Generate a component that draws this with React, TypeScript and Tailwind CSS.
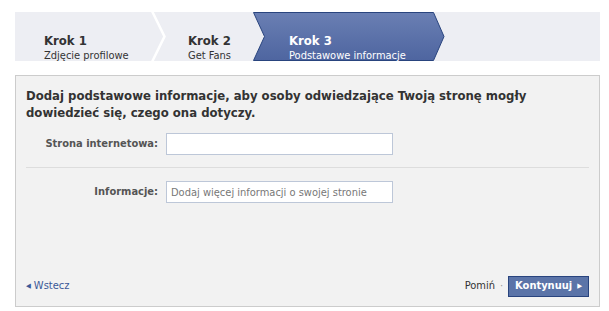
const font = "font-['DejaVu_Sans_Condensed','DejaVu_Sans',sans-serif]";

function StepBar() {
  return (
    <div className="relative h-[49px] w-[585px] overflow-hidden bg-[#edeef3]">
      <svg className="absolute inset-0" width="585" height="49" viewBox="0 0 585 49">
        <defs>
          <linearGradient id="blue" x1="0" y1="0" x2="0" y2="1">
            <stop offset="0" stopColor="#6a7fb3" />
            <stop offset="1" stopColor="#4e65a0" />
          </linearGradient>
        </defs>
        <polyline points="137,-1 149.5,24.5 137,50" fill="none" stroke="#ffffff" strokeWidth="2.5" />
        <polygon
          points="238.5,0.5 418.5,0.5 429,24.5 418.5,48.5 238.5,48.5 249.5,24.5"
          fill="url(#blue)"
          stroke="#29447e"
          strokeWidth="1"
        />
      </svg>
      <div className="relative flex h-full">
        <Step n="1" sub="Zdjęcie profilowe" className="w-[144px] pl-[29px]" />
        <Step n="2" sub="Get Fans" className="w-[101px] pl-[29px]" />
        <Step n="3" sub="Podstawowe informacje" className="w-[200px] pl-[29px]" active />
      </div>
    </div>
  );
}

function Step({ n, sub, className, active }: { n: string; sub: string; className: string; active?: boolean }) {
  return (
    <div className={`pt-[21px] ${className} ${active ? 'text-white' : 'text-[#333]'}`}>
      <div className="text-[13px] leading-[16px] font-bold whitespace-nowrap">Krok {n}</div>
      <div className="text-[11px] leading-[13px] whitespace-nowrap">{sub}</div>
    </div>
  );
}

function Field({ label, placeholder }: { label: string; placeholder?: string }) {
  return (
    <div className="flex items-start">
      <label className="w-[132px] pt-[3px] text-right text-[11px] font-bold text-[#555]">{label}</label>
      <input
        className="ml-[8px] h-[22px] w-[227px] border border-[#bdc7d8] bg-white px-[4px] text-[11px] text-[#333] outline-none placeholder:text-[#777]"
        placeholder={placeholder}
      />
    </div>
  );
}

export default function App() {
  return (
    <div className={`h-[311px] w-[609px] bg-white pl-[15px] pt-[12px] ${font}`}>
      <StepBar />
      <div className="mt-[14px] flex h-[232px] w-[585px] flex-col border border-[#ccc] bg-[#f2f2f2] px-[10px]">
        <h2 className="mt-[11px] text-[13px] leading-[17px] font-bold text-[#333]">
          Dodaj podstawowe informacje, aby osoby odwiedzające Twoją stronę mogły dowiedzieć się, czego ona dotyczy.
        </h2>
        <div className="mt-[12px] pb-[12px]">
          <Field label="Strona internetowa:" />
        </div>
        <div className="border-t border-[#ddd] pt-[13px]">
          <Field label="Informacje:" placeholder="Dodaj więcej informacji o swojej stronie" />
        </div>
        <div className="mt-auto mb-[9px] flex items-center justify-between text-[11px]">
          <a className="flex items-center gap-[3px] text-[#3b5998]" href="#">
            <span className="text-[7px]">◀</span>
            Wstecz
          </a>
          <div className="flex items-center">
            <span className="text-[#333]">Pomiń</span>
            <span className="mx-[5px] text-[#999]">·</span>
            <button className="flex h-[21px] items-center gap-[5px] border border-[#29447e] bg-[#5b74a8] px-[6px] font-bold text-white">
              Kontynuuj
              <span className="text-[7px]">▶</span>
            </button>
          </div>
        </div>
      </div>
    </div>
  );
}
